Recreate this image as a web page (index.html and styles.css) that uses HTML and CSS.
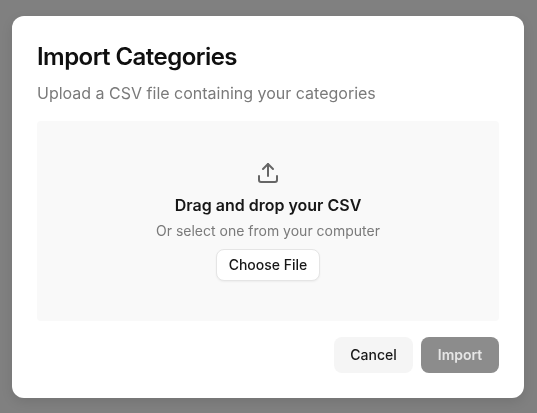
FILE: index.html
```html
<!DOCTYPE html>
<html lang="en">

<head>
    <meta charset="UTF-8">
    <title>Import Categories</title>
    <link rel="stylesheet" href="styles.css">
</head>

<body>
    <div class="dialog">
        <h1 class="title">Import Categories</h1>
        <p class="subtitle">Upload a CSV file containing your categories</p>

        <div class="dropzone">
            <svg class="upload-icon" width="24" height="24" viewBox="0 0 24 24" fill="none" stroke="currentColor" stroke-width="2" stroke-linecap="round" stroke-linejoin="round">
                <path d="M12 15V3"></path>
                <path d="M7 8l5-5 5 5"></path>
                <path d="M21 15v4a2 2 0 0 1-2 2H5a2 2 0 0 1-2-2v-4"></path>
            </svg>
            <div class="drop-title">Drag and drop your CSV</div>
            <div class="drop-hint">Or select one from your computer</div>
            <button class="choose-button">Choose File</button>
        </div>

        <div class="actions">
            <button class="cancel-button">Cancel</button>
            <button class="import-button" disabled>Import</button>
        </div>
    </div>
</body>

</html>
```

FILE: styles.css
```css
body {
    margin: 0;
    min-height: 100vh;
    overflow: hidden;
    background: #808080;
    font-family: 'Inter', sans-serif;
}

.dialog {
    position: fixed;
    top: 50%;
    left: calc(50% - 0.5px);
    transform: translate(-50%, -50%);
    filter: blur(0.3px);
    display: flex;
    flex-direction: column;
    width: 512px;
    height: 382px;
    padding: 25px;
    box-sizing: border-box;
    background: white;
    border-radius: 12px;
    box-shadow: 0 4px 12px rgba(0, 0, 0, 0.1);
}

.title {
    margin: 0;
    font-size: 24px;
    line-height: 32px;
    font-weight: 600;
    letter-spacing: -0.55px;
    color: #0f0f0f;
}

.subtitle {
    margin: 8px 0 0;
    font-size: 16px;
    line-height: 24px;
    color: #7a7a7a;
}

.dropzone {
    display: flex;
    flex-direction: column;
    align-items: center;
    height: 200px;
    margin-top: 16px;
    padding-top: 40px;
    box-sizing: border-box;
    background: #f9f9f9;
    border-radius: 4px;
}

.upload-icon {
    color: #666666;
}

.drop-title {
    margin-top: 8px;
    font-size: 16px;
    line-height: 24px;
    font-weight: 600;
    color: #171717;
}

.drop-hint {
    margin-top: 4px;
    font-size: 14px;
    line-height: 20px;
    color: #7a7a7a;
}

button {
    font-family: inherit;
    font-size: 14px;
    font-weight: 500;
    border: none;
    border-radius: 8px;
}

.choose-button {
    width: 104px;
    height: 32px;
    margin-top: 8px;
    background: white;
    color: #171717;
    border: 1px solid #e5e5e5;
    box-shadow: 0 1px 2px rgba(0, 0, 0, 0.05);
}

.actions {
    display: flex;
    justify-content: flex-end;
    gap: 8px;
    margin-top: 16px;
}

.cancel-button,
.import-button {
    height: 36px;
    width: 78px;
}

.cancel-button {
    width: 79px;
    background: #f5f5f5;
    color: #171717;
}

.import-button {
    background: #8c8c8c;
    color: #e6e6e6;
    font-weight: 600;
}
```
